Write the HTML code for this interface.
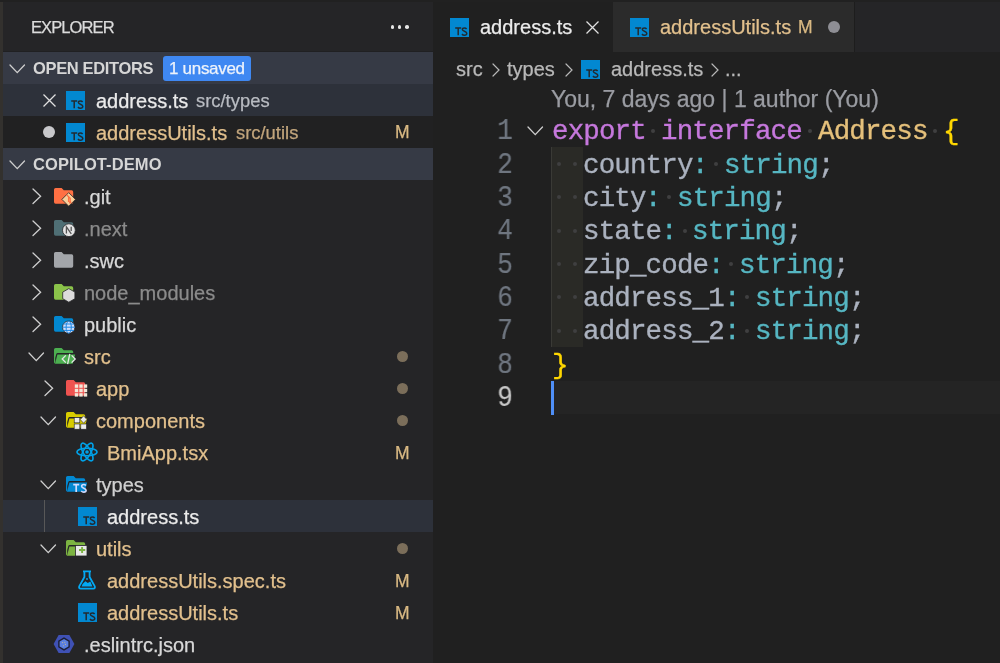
<!DOCTYPE html><html><head><meta charset="utf-8"><style>
*{margin:0;padding:0;box-sizing:border-box}
html,body{width:1000px;height:663px;overflow:hidden;background:#212121}
body{position:relative;font-family:"Liberation Sans",sans-serif;color:#d4d4d4}
.a{position:absolute}
.t{position:absolute;white-space:pre;line-height:1;will-change:transform}
.m{font-family:"Liberation Mono",monospace}
svg{position:absolute;overflow:visible}
</style></head><body>
<div class="a" style="left:0px;top:2px;width:3px;height:661px;background:#33312e;"></div>
<div class="a" style="left:3px;top:2px;width:430px;height:661px;background:#252527;"></div>
<div class="t" style="left:31.20px;top:19.33px;font-size:16.5px;color:#dcdcdc;letter-spacing:-0.9px;-webkit-text-stroke:0.25px #dcdcdc">EXPLORER</div>
<div class="a" style="left:390.59999999999997px;top:25.2px;width:3.6px;height:3.6px;background:#e6e6e6;border-radius:50%"></div>
<div class="a" style="left:397.8px;top:25.2px;width:3.6px;height:3.6px;background:#e6e6e6;border-radius:50%"></div>
<div class="a" style="left:405.2px;top:25.2px;width:3.6px;height:3.6px;background:#e6e6e6;border-radius:50%"></div>
<div class="a" style="left:3px;top:51px;width:430px;height:1px;background:#202022;"></div>
<div class="a" style="left:3px;top:52px;width:430px;height:32px;background:#363a45;"></div>
<svg style="left:9.25px;top:64.2px" width="16.5" height="9.6" viewBox="0 0 16.5 9.6"><path d="M1 1L8.25 8.6L15.5 1" fill="none" stroke="#cfcfcf" stroke-width="1.3" stroke-linecap="round"/></svg>
<div class="t" style="left:32.50px;top:60.33px;font-size:16.5px;color:#d6d6d6;font-weight:700;letter-spacing:-0.35px">OPEN EDITORS</div>
<div class="a" style="left:163px;top:56px;width:88px;height:25px;background:#3f88f2;border-radius:3px"></div>
<div class="t" style="left:168.80px;top:59.91px;font-size:17px;color:#eef3fb;letter-spacing:-0.3px;-webkit-text-stroke:0.25px #eef3fb">1 unsaved</div>
<div class="a" style="left:3px;top:84px;width:430px;height:32px;background:#2d313a;"></div>
<svg style="left:43px;top:94px" width="13" height="13" viewBox="0 0 13 13"><path d="M0.5 0.5L12.5 12.5M12.5 0.5L0.5 12.5" stroke="#e0e0e0" stroke-width="1.3"/></svg>
<svg style="left:66px;top:91px" width="19" height="19" viewBox="0 0 19 19"><rect x="0" y="0" width="19" height="19" fill="#0288d1"/><path d="M5.2 10.1H11.2M8.2 10.1V17.3" stroke="#232a30" stroke-width="1.5" fill="none"/><path d="M16.6 11.0C16.1 10.3 15.3 9.95 14.4 9.95C13.2 9.95 12.35 10.6 12.35 11.55C12.35 13.6 16.8 12.9 16.8 15.3C16.8 16.45 15.8 17.2 14.45 17.2C13.4 17.2 12.5 16.8 12.0 16.0" stroke="#232a30" stroke-width="1.45" fill="none"/></svg>
<div class="t" style="left:95.50px;top:90.77px;font-size:20px;color:#ebebeb;-webkit-text-stroke:0.25px #ebebeb">address.ts</div>
<div class="t" style="left:196.00px;top:92.12px;font-size:18.4px;color:#b9bcc2;-webkit-text-stroke:0.25px #b9bcc2">src/types</div>
<div class="a" style="left:3px;top:116px;width:430px;height:32px;background:#212122;"></div>
<div class="a" style="left:43.3px;top:126.3px;width:12px;height:12px;background:#c8c8cb;border-radius:50%"></div>
<svg style="left:66px;top:123px" width="19" height="19" viewBox="0 0 19 19"><rect x="0" y="0" width="19" height="19" fill="#0288d1"/><path d="M5.2 10.1H11.2M8.2 10.1V17.3" stroke="#232a30" stroke-width="1.5" fill="none"/><path d="M16.6 11.0C16.1 10.3 15.3 9.95 14.4 9.95C13.2 9.95 12.35 10.6 12.35 11.55C12.35 13.6 16.8 12.9 16.8 15.3C16.8 16.45 15.8 17.2 14.45 17.2C13.4 17.2 12.5 16.8 12.0 16.0" stroke="#232a30" stroke-width="1.45" fill="none"/></svg>
<div class="t" style="left:95.50px;top:122.77px;font-size:20px;color:#e2c08d;-webkit-text-stroke:0.25px #e2c08d">addressUtils.ts</div>
<div class="t" style="left:236.00px;top:124.12px;font-size:18.4px;color:#c2a57c;-webkit-text-stroke:0.25px #c2a57c">src/utils</div>
<div class="t" style="left:395.00px;top:124.49px;font-size:17.5px;color:#d9b983;-webkit-text-stroke:0.25px #d9b983">M</div>
<div class="a" style="left:3px;top:148px;width:430px;height:32px;background:#363a45;"></div>
<svg style="left:9.25px;top:160.2px" width="16.5" height="9.6" viewBox="0 0 16.5 9.6"><path d="M1 1L8.25 8.6L15.5 1" fill="none" stroke="#cfcfcf" stroke-width="1.3" stroke-linecap="round"/></svg>
<div class="t" style="left:32.50px;top:156.33px;font-size:16.5px;color:#d6d6d6;font-weight:700;letter-spacing:0.1px">COPILOT-DEMO</div>
<svg style="left:32.2px;top:188.05px" width="9.6" height="16.5" viewBox="0 0 9.6 16.5"><path d="M1 1L8.6 8.25L1 15.5" fill="none" stroke="#cfcfcf" stroke-width="1.3" stroke-linecap="round"/></svg>
<svg style="left:54.3px;top:188.3px" width="24" height="20" viewBox="0 0 24 20"><g opacity="1"><path d="M1.6 0H7.6L9.8 2.3H17.6Q19.2 2.3 19.2 3.9V14.1Q19.2 15.7 17.6 15.7H1.6Q0 15.7 0 14.1V1.6Q0 0 1.6 0Z" fill="#ff7043"/></g><path d="M14.7 4.6L21.5 11.4L14.7 18.2L7.9 11.4Z" fill="#f9cf9a" stroke="#252527" stroke-width="0.8"/><path d="M12.6 6.8L16.2 10.2V14.2M14.6 8.6V14" stroke="#ff7043" stroke-width="1.3" fill="none"/><circle cx="16.2" cy="14.4" r="1.2" fill="#ff7043"/></svg>
<div class="t" style="left:84.00px;top:186.77px;font-size:20px;color:#d8d8d8;-webkit-text-stroke:0.25px #d8d8d8">.git</div>
<svg style="left:32.2px;top:220.05px" width="9.6" height="16.5" viewBox="0 0 9.6 16.5"><path d="M1 1L8.6 8.25L1 15.5" fill="none" stroke="#cfcfcf" stroke-width="1.3" stroke-linecap="round"/></svg>
<svg style="left:54.3px;top:220.3px" width="24" height="20" viewBox="0 0 24 20"><g opacity="1"><path d="M1.6 0H7.6L9.8 2.3H17.6Q19.2 2.3 19.2 3.9V14.1Q19.2 15.7 17.6 15.7H1.6Q0 15.7 0 14.1V1.6Q0 0 1.6 0Z" fill="#4f6f75"/></g><circle cx="14.9" cy="10.2" r="6.4" fill="#e4e4e4" stroke="#252527" stroke-width="0.8"/><path d="M12.4 13.6V6.8L17.3 13.8M17.2 6.8V11" stroke="#555" stroke-width="1.3" fill="none"/></svg>
<div class="t" style="left:84.00px;top:218.77px;font-size:20px;color:#8b8b8b;-webkit-text-stroke:0.25px #8b8b8b">.next</div>
<svg style="left:32.2px;top:252.05px" width="9.6" height="16.5" viewBox="0 0 9.6 16.5"><path d="M1 1L8.6 8.25L1 15.5" fill="none" stroke="#cfcfcf" stroke-width="1.3" stroke-linecap="round"/></svg>
<svg style="left:54.3px;top:252.3px" width="24" height="20" viewBox="0 0 24 20"><g opacity="1"><path d="M1.6 0H7.6L9.8 2.3H17.6Q19.2 2.3 19.2 3.9V14.1Q19.2 15.7 17.6 15.7H1.6Q0 15.7 0 14.1V1.6Q0 0 1.6 0Z" fill="#a3a6aa"/></g></svg>
<div class="t" style="left:84.00px;top:250.77px;font-size:20px;color:#d8d8d8;-webkit-text-stroke:0.25px #d8d8d8">.swc</div>
<svg style="left:32.2px;top:284.05px" width="9.6" height="16.5" viewBox="0 0 9.6 16.5"><path d="M1 1L8.6 8.25L1 15.5" fill="none" stroke="#cfcfcf" stroke-width="1.3" stroke-linecap="round"/></svg>
<svg style="left:54.3px;top:284.3px" width="24" height="20" viewBox="0 0 24 20"><g opacity="1"><path d="M1.6 0H7.6L9.8 2.3H17.6Q19.2 2.3 19.2 3.9V14.1Q19.2 15.7 17.6 15.7H1.6Q0 15.7 0 14.1V1.6Q0 0 1.6 0Z" fill="#8bc34a"/></g><path d="M14.8 4.6L20.9 8.1V14.7L14.8 18.2L8.7 14.7V8.1Z" fill="#dcdcdc" stroke="#252527" stroke-width="0.8"/></svg>
<div class="t" style="left:84.00px;top:282.77px;font-size:20px;color:#8b8b8b;-webkit-text-stroke:0.25px #8b8b8b">node_modules</div>
<svg style="left:32.2px;top:316.05px" width="9.6" height="16.5" viewBox="0 0 9.6 16.5"><path d="M1 1L8.6 8.25L1 15.5" fill="none" stroke="#cfcfcf" stroke-width="1.3" stroke-linecap="round"/></svg>
<svg style="left:54.3px;top:316.3px" width="24" height="20" viewBox="0 0 24 20"><g opacity="1"><path d="M1.6 0H7.6L9.8 2.3H17.6Q19.2 2.3 19.2 3.9V14.1Q19.2 15.7 17.6 15.7H1.6Q0 15.7 0 14.1V1.6Q0 0 1.6 0Z" fill="#0288d1"/></g><circle cx="14.7" cy="11.2" r="6.2" fill="#cfe0ff" stroke="#252527" stroke-width="0.8"/><g stroke="#1e88e5" stroke-width="1" fill="none"><ellipse cx="14.7" cy="11.2" rx="2.6" ry="6"/><path d="M8.6 11.2H20.8M9.5 8H19.9M9.5 14.4H19.9"/></g></svg>
<div class="t" style="left:84.00px;top:314.77px;font-size:20px;color:#d8d8d8;-webkit-text-stroke:0.25px #d8d8d8">public</div>
<svg style="left:27.950000000000003px;top:351.8px" width="16.5" height="9.6" viewBox="0 0 16.5 9.6"><path d="M1 1L8.25 8.6L15.5 1" fill="none" stroke="#cfcfcf" stroke-width="1.3" stroke-linecap="round"/></svg>
<svg style="left:54.3px;top:348.3px" width="24" height="20" viewBox="0 0 24 20"><g opacity="1"><path d="M1.6 0H7.6L9.8 2.3H17.6Q19.2 2.3 19.2 3.9V5.0H3.6Q2.6 5.0 2.3 6.0L1.2 10V15.7Q0 15.5 0 14.1V1.6Q0 0 1.6 0Z" fill="#4caf50"/><path d="M3.4 6.6H21.2L18.6 15.7H1.0Z" fill="#4caf50"/></g><path d="M11.8 7.4L8.2 11L11.8 14.6M17.6 7.4L21.2 11L17.6 14.6M15.8 5.8L13.6 16.2" stroke="#e8e8e8" stroke-width="1.3" fill="none"/></svg>
<div class="t" style="left:84.00px;top:346.77px;font-size:20px;color:#e2c08d;-webkit-text-stroke:0.25px #e2c08d">src</div>
<div class="a" style="left:396.9px;top:350.7px;width:11.2px;height:11.2px;background:#7b6e5a;border-radius:50%"></div>
<svg style="left:44.2px;top:380.05px" width="9.6" height="16.5" viewBox="0 0 9.6 16.5"><path d="M1 1L8.6 8.25L1 15.5" fill="none" stroke="#cfcfcf" stroke-width="1.3" stroke-linecap="round"/></svg>
<svg style="left:66.3px;top:380.3px" width="24" height="20" viewBox="0 0 24 20"><g opacity="1"><path d="M1.6 0H7.6L9.8 2.3H17.6Q19.2 2.3 19.2 3.9V14.1Q19.2 15.7 17.6 15.7H1.6Q0 15.7 0 14.1V1.6Q0 0 1.6 0Z" fill="#ef5350"/></g><g fill="#f2e6d8"><rect x="8.8" y="4.4" width="3.4" height="3.4"/><rect x="13.3" y="4.4" width="3.4" height="3.4"/><rect x="17.8" y="4.4" width="3.4" height="3.4"/><rect x="8.8" y="8.8" width="3.4" height="3.4"/><rect x="13.3" y="8.8" width="3.4" height="3.4"/><rect x="17.8" y="8.8" width="3.4" height="3.4"/><rect x="8.8" y="13.2" width="3.4" height="3.4"/><rect x="13.3" y="13.2" width="3.4" height="3.4"/><rect x="17.8" y="13.2" width="3.4" height="3.4"/></g></svg>
<div class="t" style="left:96.00px;top:378.77px;font-size:20px;color:#e2c08d;-webkit-text-stroke:0.25px #e2c08d">app</div>
<div class="a" style="left:396.9px;top:382.7px;width:11.2px;height:11.2px;background:#7b6e5a;border-radius:50%"></div>
<svg style="left:39.95px;top:415.8px" width="16.5" height="9.6" viewBox="0 0 16.5 9.6"><path d="M1 1L8.25 8.6L15.5 1" fill="none" stroke="#cfcfcf" stroke-width="1.3" stroke-linecap="round"/></svg>
<svg style="left:66.3px;top:412.3px" width="24" height="20" viewBox="0 0 24 20"><g opacity="1"><path d="M1.6 0H7.6L9.8 2.3H17.6Q19.2 2.3 19.2 3.9V5.0H3.6Q2.6 5.0 2.3 6.0L1.2 10V15.7Q0 15.5 0 14.1V1.6Q0 0 1.6 0Z" fill="#d8cc00"/><path d="M3.4 6.6H21.2L18.6 15.7H1.0Z" fill="#d8cc00"/></g><g fill="#ececec" stroke="#252527" stroke-width="0.6"><rect x="8.2" y="5.6" width="5.6" height="5.2"/><rect x="8.2" y="12" width="5.6" height="5.2"/><rect x="14.8" y="12" width="5.6" height="5.2"/><path d="M17.6 3.8L20.9 7.6L17.6 11.2L14.3 7.6Z"/></g></svg>
<div class="t" style="left:96.00px;top:410.77px;font-size:20px;color:#e2c08d;-webkit-text-stroke:0.25px #e2c08d">components</div>
<div class="a" style="left:396.9px;top:414.7px;width:11.2px;height:11.2px;background:#7b6e5a;border-radius:50%"></div>
<svg style="left:76.2px;top:441.8px" width="22" height="20" viewBox="0 0 22 20"><g fill="none" stroke="#00a2e8" stroke-width="1.6"><ellipse cx="11" cy="10" rx="10" ry="3.8"/><ellipse cx="11" cy="10" rx="10" ry="3.8" transform="rotate(60 11 10)"/><ellipse cx="11" cy="10" rx="10" ry="3.8" transform="rotate(-60 11 10)"/></g><circle cx="11" cy="10" r="1.8" fill="#00a2e8"/></svg>
<div class="t" style="left:107.00px;top:442.77px;font-size:20px;color:#e2c08d;-webkit-text-stroke:0.25px #e2c08d">BmiApp.tsx</div>
<div class="t" style="left:395.00px;top:444.79px;font-size:17.5px;color:#d9b983;-webkit-text-stroke:0.25px #d9b983">M</div>
<svg style="left:39.95px;top:479.8px" width="16.5" height="9.6" viewBox="0 0 16.5 9.6"><path d="M1 1L8.25 8.6L15.5 1" fill="none" stroke="#cfcfcf" stroke-width="1.3" stroke-linecap="round"/></svg>
<svg style="left:66.3px;top:476.3px" width="24" height="20" viewBox="0 0 24 20"><g opacity="1"><path d="M1.6 0H7.6L9.8 2.3H17.6Q19.2 2.3 19.2 3.9V5.0H3.6Q2.6 5.0 2.3 6.0L1.2 10V15.7Q0 15.5 0 14.1V1.6Q0 0 1.6 0Z" fill="#0288d1"/><path d="M3.4 6.6H21.2L18.6 15.7H1.0Z" fill="#0288d1"/></g><path d="M7.2 8.6H13.2M10.2 8.6V16" stroke="#d0dcff" stroke-width="1.7" fill="none"/><path d="M19.9 9.5C19.4 8.9 18.7 8.5 17.8 8.5C16.6 8.5 15.6 9.2 15.6 10.3C15.6 12.5 20.1 11.8 20.1 14.2C20.1 15.4 19.1 16.1 17.8 16.1C16.8 16.1 15.8 15.6 15.3 14.9" stroke="#d0dcff" stroke-width="1.6" fill="none"/></svg>
<div class="t" style="left:96.00px;top:474.77px;font-size:20px;color:#d0d0d0;-webkit-text-stroke:0.25px #d0d0d0">types</div>
<div class="a" style="left:3px;top:500px;width:430px;height:32px;background:#2d313a;"></div>
<div class="a" style="left:44px;top:500px;width:1px;height:32px;background:#585858;"></div>
<svg style="left:77.6px;top:506.8px" width="19" height="19" viewBox="0 0 19 19"><rect x="0" y="0" width="19" height="19" fill="#0288d1"/><path d="M5.2 10.1H11.2M8.2 10.1V17.3" stroke="#232a30" stroke-width="1.5" fill="none"/><path d="M16.6 11.0C16.1 10.3 15.3 9.95 14.4 9.95C13.2 9.95 12.35 10.6 12.35 11.55C12.35 13.6 16.8 12.9 16.8 15.3C16.8 16.45 15.8 17.2 14.45 17.2C13.4 17.2 12.5 16.8 12.0 16.0" stroke="#232a30" stroke-width="1.45" fill="none"/></svg>
<div class="t" style="left:107.00px;top:506.77px;font-size:20px;color:#ebebeb;-webkit-text-stroke:0.25px #ebebeb">address.ts</div>
<svg style="left:39.95px;top:543.8000000000001px" width="16.5" height="9.6" viewBox="0 0 16.5 9.6"><path d="M1 1L8.25 8.6L15.5 1" fill="none" stroke="#cfcfcf" stroke-width="1.3" stroke-linecap="round"/></svg>
<svg style="left:66.3px;top:540.3px" width="24" height="20" viewBox="0 0 24 20"><g opacity="1"><path d="M1.6 0H7.6L9.8 2.3H17.6Q19.2 2.3 19.2 3.9V5.0H3.6Q2.6 5.0 2.3 6.0L1.2 10V15.7Q0 15.5 0 14.1V1.6Q0 0 1.6 0Z" fill="#7cb342"/><path d="M3.4 6.6H21.2L18.6 15.7H1.0Z" fill="#7cb342"/></g><rect x="9.4" y="5.4" width="11.6" height="10.6" fill="#e8e8e8" stroke="#252527" stroke-width="0.8"/><path d="M16.1 6.9V13M13 10H19.2" stroke="#7cb342" stroke-width="1.9"/></svg>
<div class="t" style="left:96.00px;top:538.77px;font-size:20px;color:#e2c08d;-webkit-text-stroke:0.25px #e2c08d">utils</div>
<div class="a" style="left:396.9px;top:542.6999999999999px;width:11.2px;height:11.2px;background:#7b6e5a;border-radius:50%"></div>
<svg style="left:78px;top:570px" width="18" height="20" viewBox="0 0 18 20"><path d="M5 1.3H13M6.4 1.3V7L1.2 16.4Q0.6 18.6 2.6 18.6H15.4Q17.4 18.6 16.8 16.4L11.6 7V1.3" fill="none" stroke="#03a9f4" stroke-width="1.8" stroke-linejoin="round"/><path d="M4.6 14L7.4 11.2L9.8 13L12.4 11.6L14.4 16.4H3.6Z" fill="#03a9f4"/><circle cx="9" cy="9" r="0.9" fill="#03a9f4"/></svg>
<div class="t" style="left:107.00px;top:570.77px;font-size:20px;color:#e2c08d;-webkit-text-stroke:0.25px #e2c08d">addressUtils.spec.ts</div>
<div class="t" style="left:395.00px;top:572.79px;font-size:17.5px;color:#d9b983;-webkit-text-stroke:0.25px #d9b983">M</div>
<svg style="left:77.6px;top:602.8px" width="19" height="19" viewBox="0 0 19 19"><rect x="0" y="0" width="19" height="19" fill="#0288d1"/><path d="M5.2 10.1H11.2M8.2 10.1V17.3" stroke="#232a30" stroke-width="1.5" fill="none"/><path d="M16.6 11.0C16.1 10.3 15.3 9.95 14.4 9.95C13.2 9.95 12.35 10.6 12.35 11.55C12.35 13.6 16.8 12.9 16.8 15.3C16.8 16.45 15.8 17.2 14.45 17.2C13.4 17.2 12.5 16.8 12.0 16.0" stroke="#232a30" stroke-width="1.45" fill="none"/></svg>
<div class="t" style="left:107.00px;top:602.77px;font-size:20px;color:#e2c08d;-webkit-text-stroke:0.25px #e2c08d">addressUtils.ts</div>
<div class="t" style="left:395.00px;top:604.79px;font-size:17.5px;color:#d9b983;-webkit-text-stroke:0.25px #d9b983">M</div>
<svg style="left:53px;top:634px" width="22" height="20" viewBox="0 0 22 20"><path d="M5.6 1H16.4L21.4 10L16.4 19H5.6L0.6 10Z" fill="#3f51b5"/><path d="M11 3.3L16.8 6.65V13.35L11 16.7L5.2 13.35V6.65Z" fill="#1c1f35"/><path d="M11 4.9L15.4 7.45V12.55L11 15.1L6.6 12.55V7.45Z" fill="#5a7fe0"/><g fill="#c9b88a"><circle cx="9.6" cy="8.6" r="0.55"/><circle cx="11.8" cy="8.2" r="0.55"/><circle cx="12.4" cy="10.4" r="0.55"/><circle cx="10.4" cy="11.8" r="0.55"/></g></svg>
<div class="t" style="left:84.00px;top:634.77px;font-size:20px;color:#d8d8d8;-webkit-text-stroke:0.25px #d8d8d8">.eslintrc.json</div>
<div class="a" style="left:433px;top:2px;width:567px;height:50px;background:#252527;"></div>
<div class="a" style="left:433px;top:2px;width:180px;height:50px;background:#202020;"></div>
<div class="a" style="left:613px;top:2px;width:242px;height:50px;background:#2b2b2b;"></div>
<div class="a" style="left:854px;top:2px;width:1px;height:50px;background:#1d1d1d;"></div>
<div class="a" style="left:433px;top:52px;width:567px;height:611px;background:#202020;"></div>
<svg style="left:450px;top:17.6px" width="19" height="19" viewBox="0 0 19 19"><rect x="0" y="0" width="19" height="19" fill="#0288d1"/><path d="M5.2 10.1H11.2M8.2 10.1V17.3" stroke="#232a30" stroke-width="1.5" fill="none"/><path d="M16.6 11.0C16.1 10.3 15.3 9.95 14.4 9.95C13.2 9.95 12.35 10.6 12.35 11.55C12.35 13.6 16.8 12.9 16.8 15.3C16.8 16.45 15.8 17.2 14.45 17.2C13.4 17.2 12.5 16.8 12.0 16.0" stroke="#232a30" stroke-width="1.45" fill="none"/></svg>
<div class="t" style="left:479.50px;top:17.27px;font-size:20px;color:#ebebeb;-webkit-text-stroke:0.25px #ebebeb">address.ts</div>
<svg style="left:585.5px;top:21px" width="13" height="13" viewBox="0 0 13 13"><path d="M0.5 0.5L12.5 12.5M12.5 0.5L0.5 12.5" stroke="#e0e0e0" stroke-width="1.3"/></svg>
<svg style="left:630px;top:17.6px" width="19" height="19" viewBox="0 0 19 19"><rect x="0" y="0" width="19" height="19" fill="#0288d1"/><path d="M5.2 10.1H11.2M8.2 10.1V17.3" stroke="#232a30" stroke-width="1.5" fill="none"/><path d="M16.6 11.0C16.1 10.3 15.3 9.95 14.4 9.95C13.2 9.95 12.35 10.6 12.35 11.55C12.35 13.6 16.8 12.9 16.8 15.3C16.8 16.45 15.8 17.2 14.45 17.2C13.4 17.2 12.5 16.8 12.0 16.0" stroke="#232a30" stroke-width="1.45" fill="none"/></svg>
<div class="t" style="left:659.50px;top:17.27px;font-size:20px;color:#e2c08d;-webkit-text-stroke:0.25px #e2c08d">addressUtils.ts</div>
<div class="t" style="left:798.00px;top:18.79px;font-size:17.5px;color:#d9b983;-webkit-text-stroke:0.25px #d9b983">M</div>
<div class="a" style="left:828px;top:21px;width:12px;height:12px;background:#8e8e94;border-radius:50%"></div>
<div class="t" style="left:456.00px;top:59.07px;font-size:20px;color:#b8b8b8;-webkit-text-stroke:0.25px #b8b8b8">src</div>
<svg style="left:491.5px;top:63.3px" width="8" height="14" viewBox="0 0 8 14"><path d="M1 1L7 7.0L1 13" fill="none" stroke="#b8b8b8" stroke-width="1.2" stroke-linecap="round"/></svg>
<div class="t" style="left:507.30px;top:59.07px;font-size:20px;color:#b8b8b8;-webkit-text-stroke:0.25px #b8b8b8">types</div>
<svg style="left:564.5px;top:63.3px" width="8" height="14" viewBox="0 0 8 14"><path d="M1 1L7 7.0L1 13" fill="none" stroke="#b8b8b8" stroke-width="1.2" stroke-linecap="round"/></svg>
<svg style="left:580.5px;top:59.5px" width="19" height="19" viewBox="0 0 19 19"><rect x="0" y="0" width="19" height="19" fill="#0288d1"/><path d="M5.2 10.1H11.2M8.2 10.1V17.3" stroke="#232a30" stroke-width="1.5" fill="none"/><path d="M16.6 11.0C16.1 10.3 15.3 9.95 14.4 9.95C13.2 9.95 12.35 10.6 12.35 11.55C12.35 13.6 16.8 12.9 16.8 15.3C16.8 16.45 15.8 17.2 14.45 17.2C13.4 17.2 12.5 16.8 12.0 16.0" stroke="#232a30" stroke-width="1.45" fill="none"/></svg>
<div class="t" style="left:610.50px;top:59.07px;font-size:20px;color:#b8b8b8;-webkit-text-stroke:0.25px #b8b8b8">address.ts</div>
<svg style="left:710.5px;top:63.3px" width="8" height="14" viewBox="0 0 8 14"><path d="M1 1L7 7.0L1 13" fill="none" stroke="#b8b8b8" stroke-width="1.2" stroke-linecap="round"/></svg>
<div class="t" style="left:725.00px;top:59.07px;font-size:20px;color:#b8b8b8;-webkit-text-stroke:0.25px #b8b8b8">...</div>
<div class="t" style="left:551.00px;top:87.93px;font-size:23px;color:#9a9ca2;-webkit-text-stroke:0.25px #9a9ca2">You, 7 days ago | 1 author (You)</div>
<div class="a" style="left:551px;top:147px;width:32px;height:200px;background:#2a2a26;"></div>
<div class="a" style="left:551px;top:147px;width:1px;height:200px;background:#3a3a36;"></div>
<div class="a" style="left:551px;top:381px;width:449px;height:33px;background:#242424;"></div>
<div class="a" style="left:551px;top:381px;width:3px;height:33.5px;background:#4f8ff7;"></div>
<div class="t m" style="left:412.00px;top:117.27px;font-size:29px;color:#6f7680;-webkit-text-stroke:0.2px #6f7680;width:100.9px;text-align:right;transform:scaleX(0.9);transform-origin:100% 50%">1</div>
<div class="t m" style="left:412.00px;top:150.60px;font-size:29px;color:#6f7680;-webkit-text-stroke:0.2px #6f7680;width:100.9px;text-align:right;transform:scaleX(0.9);transform-origin:100% 50%">2</div>
<div class="t m" style="left:412.00px;top:183.94px;font-size:29px;color:#6f7680;-webkit-text-stroke:0.2px #6f7680;width:100.9px;text-align:right;transform:scaleX(0.9);transform-origin:100% 50%">3</div>
<div class="t m" style="left:412.00px;top:217.27px;font-size:29px;color:#6f7680;-webkit-text-stroke:0.2px #6f7680;width:100.9px;text-align:right;transform:scaleX(0.9);transform-origin:100% 50%">4</div>
<div class="t m" style="left:412.00px;top:250.60px;font-size:29px;color:#6f7680;-webkit-text-stroke:0.2px #6f7680;width:100.9px;text-align:right;transform:scaleX(0.9);transform-origin:100% 50%">5</div>
<div class="t m" style="left:412.00px;top:283.94px;font-size:29px;color:#6f7680;-webkit-text-stroke:0.2px #6f7680;width:100.9px;text-align:right;transform:scaleX(0.9);transform-origin:100% 50%">6</div>
<div class="t m" style="left:412.00px;top:317.27px;font-size:29px;color:#6f7680;-webkit-text-stroke:0.2px #6f7680;width:100.9px;text-align:right;transform:scaleX(0.9);transform-origin:100% 50%">7</div>
<div class="t m" style="left:412.00px;top:350.60px;font-size:29px;color:#6f7680;-webkit-text-stroke:0.2px #6f7680;width:100.9px;text-align:right;transform:scaleX(0.9);transform-origin:100% 50%">8</div>
<div class="t m" style="left:412.00px;top:383.94px;font-size:29px;color:#c6c6c6;-webkit-text-stroke:0.2px #c6c6c6;width:100.9px;text-align:right;transform:scaleX(0.9);transform-origin:100% 50%">9</div>
<svg style="left:526.75px;top:126.00000000000001px" width="16.5" height="9.6" viewBox="0 0 16.5 9.6"><path d="M1 1L8.25 8.6L15.5 1" fill="none" stroke="#cfcfcf" stroke-width="1.3" stroke-linecap="round"/></svg>
<div class="t m" style="left:551.50px;top:118.42px;font-size:27.5px;color:#c678dd;letter-spacing:-0.8524750000000001px;-webkit-text-stroke:0.35px #c678dd">export</div>
<div class="a" style="left:651.225px;top:128.7px;width:4px;height:4px;background:#3f3f40;border-radius:50%"></div>
<div class="t m" style="left:661.05px;top:118.42px;font-size:27.5px;color:#c678dd;letter-spacing:-0.8524750000000001px;-webkit-text-stroke:0.35px #c678dd">interface</div>
<div class="a" style="left:807.725px;top:128.7px;width:4px;height:4px;background:#3f3f40;border-radius:50%"></div>
<div class="t m" style="left:817.55px;top:118.42px;font-size:27.5px;color:#e5c07b;letter-spacing:-0.8524750000000001px;-webkit-text-stroke:0.35px #e5c07b">Address</div>
<div class="a" style="left:932.9250000000001px;top:128.7px;width:4px;height:4px;background:#3f3f40;border-radius:50%"></div>
<div class="t m" style="left:942.75px;top:118.42px;font-size:27.5px;color:#ffd700;letter-spacing:-0.8524750000000001px;-webkit-text-stroke:0.35px #ffd700">{</div>
<div class="a" style="left:557.325px;top:162.033px;width:4px;height:4px;background:#3f3f40;border-radius:50%"></div>
<div class="a" style="left:572.975px;top:162.033px;width:4px;height:4px;background:#3f3f40;border-radius:50%"></div>
<div class="t m" style="left:582.80px;top:151.75px;font-size:27.5px;color:#abb2bf;letter-spacing:-0.8524750000000001px;-webkit-text-stroke:0.35px #abb2bf">country</div>
<div class="t m" style="left:692.35px;top:151.75px;font-size:27.5px;color:#56b6c2;letter-spacing:-0.8524750000000001px;-webkit-text-stroke:0.35px #56b6c2">:</div>
<div class="a" style="left:713.825px;top:162.033px;width:4px;height:4px;background:#3f3f40;border-radius:50%"></div>
<div class="t m" style="left:723.65px;top:151.75px;font-size:27.5px;color:#56b6c2;letter-spacing:-0.8524750000000001px;-webkit-text-stroke:0.35px #56b6c2">string</div>
<div class="t m" style="left:817.55px;top:151.75px;font-size:27.5px;color:#abb2bf;letter-spacing:-0.8524750000000001px;-webkit-text-stroke:0.35px #abb2bf">;</div>
<div class="a" style="left:557.325px;top:195.36599999999999px;width:4px;height:4px;background:#3f3f40;border-radius:50%"></div>
<div class="a" style="left:572.975px;top:195.36599999999999px;width:4px;height:4px;background:#3f3f40;border-radius:50%"></div>
<div class="t m" style="left:582.80px;top:185.09px;font-size:27.5px;color:#abb2bf;letter-spacing:-0.8524750000000001px;-webkit-text-stroke:0.35px #abb2bf">city</div>
<div class="t m" style="left:645.40px;top:185.09px;font-size:27.5px;color:#56b6c2;letter-spacing:-0.8524750000000001px;-webkit-text-stroke:0.35px #56b6c2">:</div>
<div class="a" style="left:666.875px;top:195.36599999999999px;width:4px;height:4px;background:#3f3f40;border-radius:50%"></div>
<div class="t m" style="left:676.70px;top:185.09px;font-size:27.5px;color:#56b6c2;letter-spacing:-0.8524750000000001px;-webkit-text-stroke:0.35px #56b6c2">string</div>
<div class="t m" style="left:770.60px;top:185.09px;font-size:27.5px;color:#abb2bf;letter-spacing:-0.8524750000000001px;-webkit-text-stroke:0.35px #abb2bf">;</div>
<div class="a" style="left:557.325px;top:228.69899999999998px;width:4px;height:4px;background:#3f3f40;border-radius:50%"></div>
<div class="a" style="left:572.975px;top:228.69899999999998px;width:4px;height:4px;background:#3f3f40;border-radius:50%"></div>
<div class="t m" style="left:582.80px;top:218.42px;font-size:27.5px;color:#abb2bf;letter-spacing:-0.8524750000000001px;-webkit-text-stroke:0.35px #abb2bf">state</div>
<div class="t m" style="left:661.05px;top:218.42px;font-size:27.5px;color:#56b6c2;letter-spacing:-0.8524750000000001px;-webkit-text-stroke:0.35px #56b6c2">:</div>
<div class="a" style="left:682.5250000000001px;top:228.69899999999998px;width:4px;height:4px;background:#3f3f40;border-radius:50%"></div>
<div class="t m" style="left:692.35px;top:218.42px;font-size:27.5px;color:#56b6c2;letter-spacing:-0.8524750000000001px;-webkit-text-stroke:0.35px #56b6c2">string</div>
<div class="t m" style="left:786.25px;top:218.42px;font-size:27.5px;color:#abb2bf;letter-spacing:-0.8524750000000001px;-webkit-text-stroke:0.35px #abb2bf">;</div>
<div class="a" style="left:557.325px;top:262.032px;width:4px;height:4px;background:#3f3f40;border-radius:50%"></div>
<div class="a" style="left:572.975px;top:262.032px;width:4px;height:4px;background:#3f3f40;border-radius:50%"></div>
<div class="t m" style="left:582.80px;top:251.75px;font-size:27.5px;color:#abb2bf;letter-spacing:-0.8524750000000001px;-webkit-text-stroke:0.35px #abb2bf">zip_code</div>
<div class="t m" style="left:708.00px;top:251.75px;font-size:27.5px;color:#56b6c2;letter-spacing:-0.8524750000000001px;-webkit-text-stroke:0.35px #56b6c2">:</div>
<div class="a" style="left:729.475px;top:262.032px;width:4px;height:4px;background:#3f3f40;border-radius:50%"></div>
<div class="t m" style="left:739.30px;top:251.75px;font-size:27.5px;color:#56b6c2;letter-spacing:-0.8524750000000001px;-webkit-text-stroke:0.35px #56b6c2">string</div>
<div class="t m" style="left:833.20px;top:251.75px;font-size:27.5px;color:#abb2bf;letter-spacing:-0.8524750000000001px;-webkit-text-stroke:0.35px #abb2bf">;</div>
<div class="a" style="left:557.325px;top:295.36499999999995px;width:4px;height:4px;background:#3f3f40;border-radius:50%"></div>
<div class="a" style="left:572.975px;top:295.36499999999995px;width:4px;height:4px;background:#3f3f40;border-radius:50%"></div>
<div class="t m" style="left:582.80px;top:285.09px;font-size:27.5px;color:#abb2bf;letter-spacing:-0.8524750000000001px;-webkit-text-stroke:0.35px #abb2bf">address_1</div>
<div class="t m" style="left:723.65px;top:285.09px;font-size:27.5px;color:#56b6c2;letter-spacing:-0.8524750000000001px;-webkit-text-stroke:0.35px #56b6c2">:</div>
<div class="a" style="left:745.125px;top:295.36499999999995px;width:4px;height:4px;background:#3f3f40;border-radius:50%"></div>
<div class="t m" style="left:754.95px;top:285.09px;font-size:27.5px;color:#56b6c2;letter-spacing:-0.8524750000000001px;-webkit-text-stroke:0.35px #56b6c2">string</div>
<div class="t m" style="left:848.85px;top:285.09px;font-size:27.5px;color:#abb2bf;letter-spacing:-0.8524750000000001px;-webkit-text-stroke:0.35px #abb2bf">;</div>
<div class="a" style="left:557.325px;top:328.698px;width:4px;height:4px;background:#3f3f40;border-radius:50%"></div>
<div class="a" style="left:572.975px;top:328.698px;width:4px;height:4px;background:#3f3f40;border-radius:50%"></div>
<div class="t m" style="left:582.80px;top:318.42px;font-size:27.5px;color:#abb2bf;letter-spacing:-0.8524750000000001px;-webkit-text-stroke:0.35px #abb2bf">address_2</div>
<div class="t m" style="left:723.65px;top:318.42px;font-size:27.5px;color:#56b6c2;letter-spacing:-0.8524750000000001px;-webkit-text-stroke:0.35px #56b6c2">:</div>
<div class="a" style="left:745.125px;top:328.698px;width:4px;height:4px;background:#3f3f40;border-radius:50%"></div>
<div class="t m" style="left:754.95px;top:318.42px;font-size:27.5px;color:#56b6c2;letter-spacing:-0.8524750000000001px;-webkit-text-stroke:0.35px #56b6c2">string</div>
<div class="t m" style="left:848.85px;top:318.42px;font-size:27.5px;color:#abb2bf;letter-spacing:-0.8524750000000001px;-webkit-text-stroke:0.35px #abb2bf">;</div>
<div class="t m" style="left:551.50px;top:351.75px;font-size:27.5px;color:#ffd700;letter-spacing:-0.8524750000000001px;-webkit-text-stroke:0.35px #ffd700">}</div>
</body></html>
